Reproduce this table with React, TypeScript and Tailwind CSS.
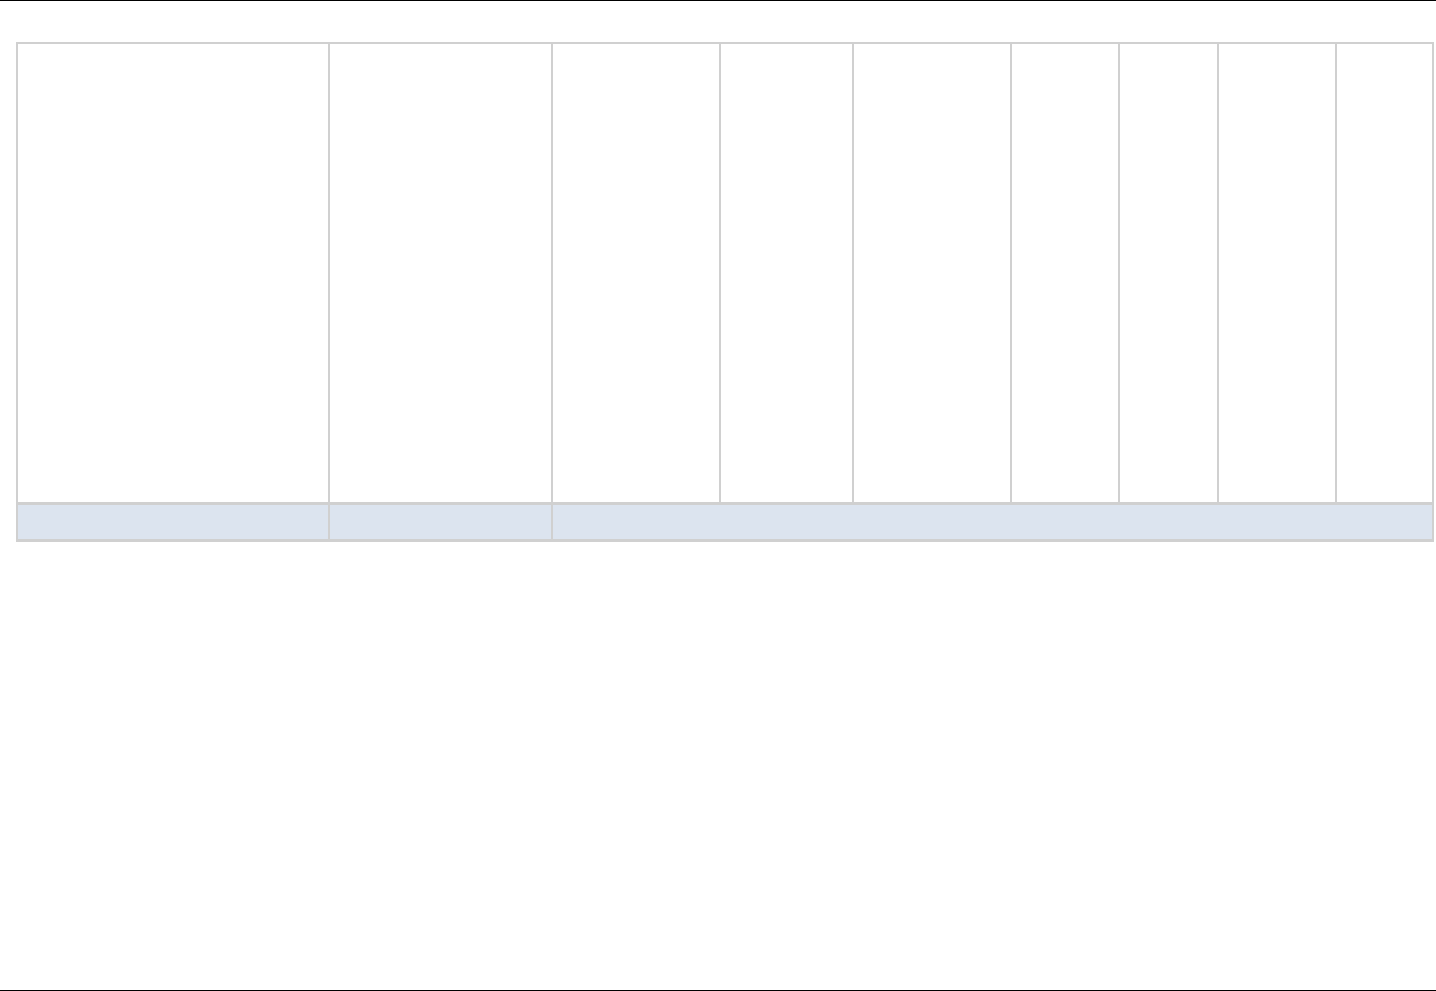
const bodyColumns = [
  'w-[312px] border-r-2',
  'w-[223px] border-r-2',
  'w-[168px] border-r-2',
  'w-[133px] border-r-2',
  'w-[158px] border-r-2',
  'w-[108px] border-r-2',
  'w-[99px] border-r-2',
  'w-[118px] border-r-2',
  'w-[95px]',
];

const App = () => {
  return (
    <div className="h-[991px] border-y border-black bg-white font-['Liberation_Sans',sans-serif]">
      <div className="px-4 pt-[41px]">
        {/* Grid table */}
        <div className="w-[1418px] border-2 border-b-[3px] border-[#d0d0d0]">
          <div className="flex h-[458px]">
            {bodyColumns.map((cls, i) => (
              <div key={i} className={`${cls} shrink-0 border-[#d0d0d0] bg-white`} />
            ))}
          </div>

          {/* Summary row */}
          <div className="flex h-[37px] border-t-[3px] border-[#d0d0d0] bg-[#dce4ef]">
            <div className="w-[312px] shrink-0 border-r-2 border-[#d0d0d0]" />
            <div className="w-[223px] shrink-0 border-r-2 border-[#d0d0d0]" />
            <div className="flex-1" />
          </div>
        </div>
      </div>
    </div>
  );
};

export default App;
